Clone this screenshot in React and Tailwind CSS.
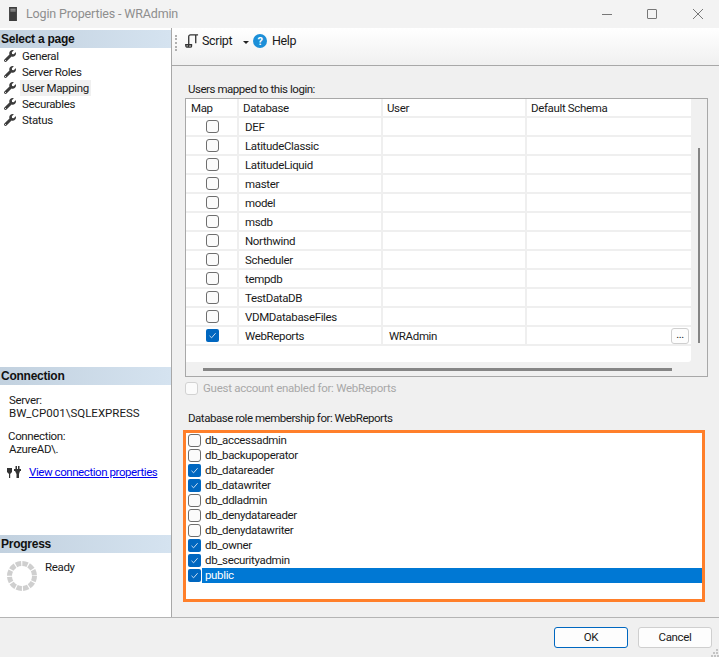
import React from 'react'
import { FaWrench } from 'react-icons/fa'

const pages = ['General', 'Server Roles', 'User Mapping', 'Securables', 'Status']
const databases = ['DEF', 'LatitudeClassic', 'LatitudeLiquid', 'master', 'model', 'msdb', 'Northwind', 'Scheduler', 'tempdb', 'TestDataDB', 'VDMDatabaseFiles', 'WebReports']
const roles = [
  ['db_accessadmin', false],
  ['db_backupoperator', false],
  ['db_datareader', true],
  ['db_datawriter', true],
  ['db_ddladmin', false],
  ['db_denydatareader', false],
  ['db_denydatawriter', false],
  ['db_owner', true],
  ['db_securityadmin', true],
  ['public', true],
]

function Check({ checked, disabled }) {
  if (checked) {
    return (
      <div className="w-[13px] h-[13px] shrink-0 rounded-[2px] bg-[#0067c0] flex items-center justify-center">
        <svg width="9" height="9" viewBox="0 0 9 9" fill="none" stroke="#c8dcf0" strokeWidth="1"><path d="M1.5 4.8 L3.6 6.8 L7.6 2.2" /></svg>
      </div>
    )
  }
  return <div className={`w-[13px] h-[13px] shrink-0 rounded-[3px] border bg-[#fbfbfb] ${disabled ? 'border-[#d2d2d2]' : 'border-[#6e6e6e]'}`} />
}

function SectionHeader({ children }) {
  return (
    <div className="h-[18px] flex items-center bg-gradient-to-r from-[#c2d1df] to-[#d5e3f0] text-[12px] font-bold text-[#111] tracking-[-0.25px] pl-px font-['Liberation_Sans',sans-serif]">
      {children}
    </div>
  )
}

function Sidebar() {
  return (
    <div className="w-[172px] shrink-0 bg-white border-r border-[#a8a8a8] flex flex-col pt-[2px]">
      <SectionHeader>Select a page</SectionHeader>
      <div className="flex flex-col h-[319px]">
        {pages.map((p) => (
          <div key={p} className="h-[16px] flex items-center pl-[4px] gap-[4px]">
            <FaWrench className="text-[#3c3c3c] text-[12px] -scale-x-100 rotate-90" />
            <span className={`px-[2px] pt-px h-full flex items-center ${p === 'User Mapping' ? 'bg-[#f0f0f0]' : ''}`}>{p}</span>
          </div>
        ))}
      </div>
      <SectionHeader>Connection</SectionHeader>
      <div className="h-[150px] pl-[9px] pt-[9px] leading-[13px]">
        <div>Server:</div>
        <div className="tracking-normal">BW_CP001\SQLEXPRESS</div>
        <div className="mt-[10px] -ml-px">Connection:</div>
        <div>AzureAD\.</div>
        <div className="flex items-center gap-[8px] mt-[10px] -ml-[2px]">
          <svg width="14" height="13" viewBox="0 0 14 13" fill="#333">
            <path d="M0 2 H5 V6 L3.2 8 V12 H2 V8 L0 6 Z" />
            <path d="M7 3 H14 V5 H13 L12 8 V12 H9.5 V8 L8 5 H7 Z" />
            <rect x="8.5" y="0" width="1.5" height="3" />
            <rect x="11" y="0" width="1.5" height="3" />
          </svg>
          <a className="text-[#0000ee] underline whitespace-nowrap tracking-[-0.43px]">View connection properties</a>
        </div>
      </div>
      <SectionHeader>Progress</SectionHeader>
      <div className="flex pl-[7px] pt-[8px] gap-[8px]">
        <svg width="30" height="30" viewBox="0 0 30 30" fill="none">
          <circle cx="15" cy="15" r="12.5" stroke="#cfcfcf" strokeWidth="5" strokeDasharray="5.4 1.14" />
        </svg>
        <span className="mt-[1px]">Ready</span>
      </div>
    </div>
  )
}

function Toolbar() {
  return (
    <div className="h-[38px] shrink-0 bg-gradient-to-b from-white to-[#f0f0f0] border-b border-[#a8a8a8] flex items-start pt-[6px]">
      <div className="w-[2px] h-[16px] ml-[3px] mt-[1px] border-l-2 border-dotted border-[#b0b0b0]" />
      <svg className="ml-[8px]" width="14" height="14" viewBox="0 0 15 15" fill="none" stroke="#333" strokeWidth="1.4">
        <path d="M4 12 V3 Q4 1 6 1 H14 M4 12 Q4 14 2 14 Q0.8 14 0.8 11.5 H7 V13 Q7 14 5.5 14 H2 M11.5 1 V10" />
      </svg>
      <span className="ml-[3px] text-[12.5px] leading-[14px] w-[30px]">Script</span>
      <div className="ml-[11px] mt-[7px] w-0 h-0 border-x-[3px] border-x-transparent border-t-[3px] border-t-[#222]" />
      <div className="ml-[4px] w-[14px] h-[14px] rounded-full bg-[#1c8fd8] text-white text-[11px] font-bold flex items-center justify-center">?</div>
      <span className="ml-[5px] text-[12.5px] leading-[14px]">Help</span>
    </div>
  )
}

function MappingGrid() {
  return (
    <div className="h-[279px] ml-[13px] mr-[11px] border border-[#a8a8a8] flex">
      <div className="flex-1 flex flex-col pb-[7px]">
        <div className="flex-1 bg-white rounded-br-[3px] flex flex-col">
          <div className="h-[19px] flex items-center border-b-2 border-[#efefef]">
            <div className="w-[53px] pl-[5px] pt-[2px] border-r-2 border-[#efefef] h-full flex items-center">Map</div>
            <div className="w-[144px] pl-[4px] pt-[2px] border-r-2 border-[#efefef] h-full flex items-center">Database</div>
            <div className="w-[144px] pl-[4px] pt-[2px] border-r-2 border-[#efefef] h-full flex items-center">User</div>
            <div className="flex-1 pl-[4px] pt-[2px]">Default Schema</div>
          </div>
          {databases.map((d) => (
            <div key={d} className="h-[19px] flex items-center border-b-2 border-[#efefef]">
              <div className="w-[53px] border-r-2 border-[#efefef] h-full flex items-center justify-center pl-[2px]">
                <Check checked={d === 'WebReports'} />
              </div>
              <div className="w-[144px] pl-[6px] pt-[2px] border-r-2 border-[#efefef] h-full flex items-center">{d}</div>
              <div className="w-[144px] pl-[6px] pt-[2px] border-r-2 border-[#efefef] h-full flex items-center">{d === 'WebReports' ? 'WRAdmin' : ''}</div>
              <div className="flex-1 h-full flex items-center justify-end pr-[2px]">
                {d === 'WebReports' && (
                  <div className="w-[18px] h-[16px] rounded-[3px] border border-[#cfcfcf] bg-[#fdfdfd] flex items-center justify-center text-[11px] leading-none pb-[3px]">...</div>
                )}
              </div>
            </div>
          ))}
        </div>
        <div className="h-[3px] mt-[6px] ml-[17px] mr-[19px] bg-[#858585] -mb-[2px]" />
      </div>
      <div className="w-[16px] shrink-0 pt-[49px] pb-[33px] flex justify-center">
        <div className="w-[2px] h-full bg-[#858585]" />
      </div>
    </div>
  )
}

function RoleList() {
  return (
    <div className="h-[172px] ml-[11px] mr-[14px] border-[3px] border-[#ff7f2a] bg-white flex flex-col">
      {roles.map(([name, checked]) => (
        <div key={name} className="h-[15px] flex items-center pl-[2px]">
          <Check checked={checked} />
          <span className={`ml-px pl-[3px] h-full flex-1 flex items-center ${name === 'public' ? 'bg-[#0078d4] text-white' : ''}`}>{name}</span>
        </div>
      ))}
    </div>
  )
}

function App() {
  return (
    <div className="relative w-[719px] h-[657px] bg-[#f0f0f0] flex flex-col text-[11.5px] tracking-[-0.35px] leading-none text-[#1a1a1a] overflow-hidden font-['Roboto',sans-serif]">
      <div className="h-[28px] shrink-0 flex items-center bg-[#f3f3f3]">
        <svg className="ml-[9px]" width="8" height="14" viewBox="0 0 9 16">
          <rect width="9" height="16" fill="#3d3d3d" />
          <rect x="1.5" y="2" width="6" height="1" fill="#bbb" />
          <rect x="1.5" y="4" width="6" height="1" fill="#bbb" />
        </svg>
        <span className="ml-[9px] text-[12.5px] tracking-[-0.15px] text-[#8e8e8e]">Login Properties - WRAdmin</span>
        <div className="ml-auto flex items-center">
          <div className="w-[10px] h-px bg-[#777]" />
          <div className="ml-[35px] w-[10px] h-[10px] rounded-[1px] border border-[#777]" />
          <svg className="ml-[36px] mr-[16px]" width="10" height="10" viewBox="0 0 10 10" stroke="#777" strokeWidth="1"><path d="M0 0 L10 10 M10 0 L0 10" /></svg>
        </div>
      </div>
      <div className="flex-1 flex min-h-0">
        <Sidebar />
        <div className="flex-1 flex flex-col">
          <Toolbar />
          <div className="pl-[16px] h-[32px] flex items-end pb-[3px] tracking-[-0.46px]">Users mapped to this login:</div>
          <MappingGrid />
          <div className="flex items-center h-[22px] ml-[13px] text-[#a8a8a8]">
            <Check disabled />
            <span className="ml-[5px] pt-px tracking-[-0.27px]">Guest account enabled for: WebReports</span>
          </div>
          <div className="pl-[16px] h-[31px] flex items-end pb-[6px] tracking-[-0.47px]">Database role membership for: WebReports</div>
          <RoleList />
        </div>
      </div>
      <div className="h-[40px] shrink-0 border-t border-[#b4b4b4] flex items-start justify-end pt-[9px] pr-[7px] gap-[10px]">
        <div className="w-[74px] h-[21px] rounded-[3px] border border-[#0067c0] bg-[#fdfdfd] flex items-center justify-center">OK</div>
        <div className="w-[74px] h-[21px] rounded-[3px] border border-[#cfcfcf] bg-[#fdfdfd] flex items-center justify-center">Cancel</div>
      </div>
      <svg className="absolute right-0 bottom-0" width="8" height="8" viewBox="0 0 8 8" fill="#c4c4c4">
        <rect x="5" y="0" width="2" height="2" />
        <rect x="2" y="3" width="2" height="2" />
        <rect x="5" y="3" width="2" height="2" />
        <rect x="0" y="6" width="2" height="2" />
        <rect x="3" y="6" width="2" height="2" />
        <rect x="6" y="6" width="2" height="2" />
      </svg>
    </div>
  )
}

export default App
